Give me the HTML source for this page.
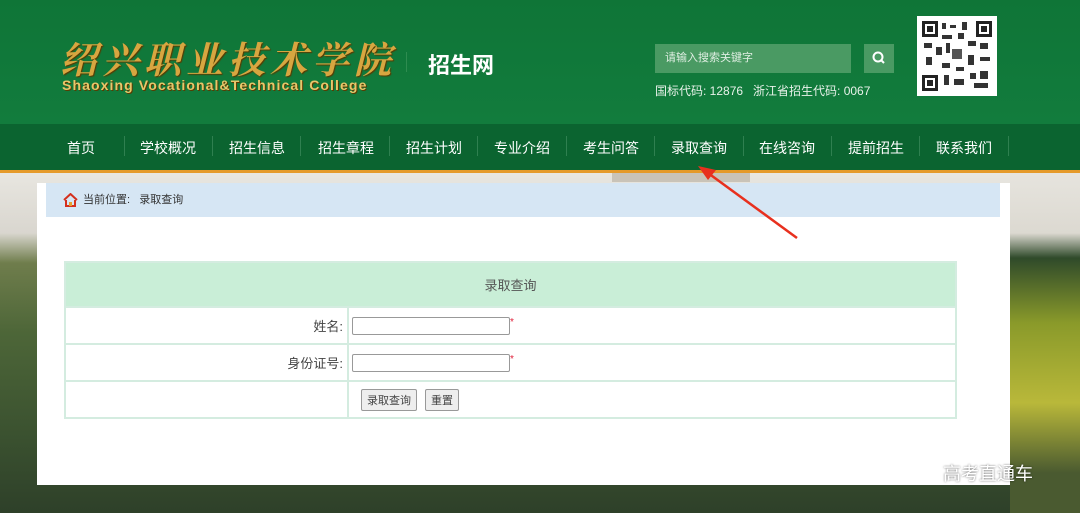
<!DOCTYPE html>
<html><head><meta charset="utf-8"><style>
*{margin:0;padding:0;box-sizing:border-box}
body{width:1080px;height:513px;overflow:hidden;position:relative;font-family:"Liberation Sans","Noto Sans CJK SC",sans-serif;background:#3d5a35}
.bg{position:absolute;left:0;top:173px;width:1080px;height:340px;background:linear-gradient(180deg,#e8e6e0 0,#d9d6cf 60px,#6f7d4c 90px,#4d6638 160px,#3b5230 260px,#2e4029 340px)}
.bgr{position:absolute;left:1010px;top:173px;width:70px;height:340px;background:linear-gradient(180deg,#e6e4de 0,#dcd9d1 60px,#2f4a2a 85px,#8a9a2a 150px,#b9b83a 230px,#4a5a30 300px)}
.header{position:absolute;left:0;top:0;width:1080px;height:124px;background:linear-gradient(180deg,#0f7537,#127c3d)}
.nav{position:absolute;left:0;top:124px;width:1080px;height:46px;background:#0b6430}
.orange{position:absolute;left:0;top:170px;width:1080px;height:3px;background:#e59a2a}
.logo{position:absolute;left:60px;top:30px;font-family:"Noto Serif CJK SC",serif;font-size:37px;font-weight:bold;color:#d7a640;letter-spacing:5px;font-style:italic;text-shadow:1px 1px 1px #5a3a00;white-space:nowrap}
.logoen{position:absolute;left:62px;top:77px;font-size:14px;font-weight:bold;color:#e8c66a;text-shadow:1px 1px 0 #5a3a00;letter-spacing:1.1px;white-space:nowrap}
.sep{position:absolute;left:406px;top:52px;width:1px;height:20px;background:#2e8c50}
.zsw{position:absolute;left:428px;top:48px;color:#fff;font-size:22px;font-weight:bold}
.search{position:absolute;left:655px;top:44px;width:196px;height:29px;background:#4a9a63;color:#dfeee2;font-size:11px;line-height:29px;padding-left:10px}
.sbtn{position:absolute;left:864px;top:44px;width:30px;height:29px;background:#4a9a63}
.codes{position:absolute;left:655px;top:82px;color:#e8f2ea;font-size:12px;white-space:nowrap}
.qr{position:absolute;left:917px;top:16px;width:80px;height:80px;background:#fff;padding:5px}
.navi{position:absolute;top:138px;color:#fff;font-size:14px}
.nsep{position:absolute;top:136px;width:1px;height:20px;background:#2f8050}
.tab{position:absolute;left:612px;top:173px;width:138px;height:9px;background:#c9c3b8}
.panel{position:absolute;left:37px;top:183px;width:973px;height:302px;background:#fff}
.crumb{position:absolute;left:46px;top:183px;width:954px;height:34px;background:#d6e6f4;font-size:11px;color:#333;line-height:34px;padding-left:37px}
table{position:absolute;left:64px;top:261px;width:893px;border-collapse:collapse}
td{border:2px solid #d4ece0;font-size:13px;color:#444}
.th{background:#c9eed7;height:45px;text-align:center;color:#555;font-size:13px}
.lab{width:283px;text-align:right;padding-right:4px;height:37px}
.inp{display:inline-block;width:158px;height:18px;border:1px solid #999;border-radius:2px;vertical-align:middle;margin-left:3px}
.star{color:#e0203a;font-size:10px;vertical-align:top}
.btn{display:inline-block;border:1px solid #999;background:#eee;font-size:11px;padding:2px 5px;border-radius:2px;margin-left:12px}
.wm{position:absolute;left:943px;top:460px;color:#fff;font-size:18px;z-index:5;text-shadow:0 0 2px rgba(0,0,0,.6)}
.arrow{position:absolute;left:0;top:0}
</style></head><body>
<div class="bg"></div><div class="bgr"></div>
<div class="header"></div>
<div class="logo">绍兴职业技术学院</div>
<div class="logoen">Shaoxing Vocational&amp;Technical College</div>
<div class="sep"></div>
<div class="zsw">招生网</div>
<div class="search">请输入搜索关键字</div>
<div class="sbtn"><svg width="30" height="29"><circle cx="14" cy="13" r="4.5" fill="none" stroke="#fff" stroke-width="2"/><line x1="17" y1="16" x2="20" y2="19" stroke="#fff" stroke-width="2"/></svg></div>
<div class="codes">国标代码: 12876&nbsp;&nbsp;&nbsp;浙江省招生代码: 0067</div>
<div class="qr"><svg width="70" height="70" viewBox="0 0 70 70"><rect x="0" y="0" width="16" height="16" fill="#222"/><rect x="3" y="3" width="10" height="10" fill="#fff"/><rect x="5" y="5" width="6" height="6" fill="#222"/><rect x="54" y="0" width="16" height="16" fill="#222"/><rect x="57" y="3" width="10" height="10" fill="#fff"/><rect x="59" y="5" width="6" height="6" fill="#222"/><rect x="0" y="54" width="16" height="16" fill="#222"/><rect x="3" y="57" width="10" height="10" fill="#fff"/><rect x="5" y="59" width="6" height="6" fill="#222"/><g fill="#333"><rect x="20" y="2" width="4" height="6"/><rect x="28" y="4" width="6" height="3"/><rect x="40" y="1" width="5" height="8"/><rect x="20" y="14" width="10" height="4"/><rect x="36" y="12" width="6" height="6"/><rect x="2" y="22" width="8" height="5"/><rect x="14" y="26" width="6" height="8"/><rect x="24" y="22" width="4" height="10"/><rect x="46" y="20" width="8" height="5"/><rect x="58" y="22" width="8" height="6"/><rect x="30" y="28" width="10" height="10" fill="#555"/><rect x="4" y="36" width="6" height="8"/><rect x="46" y="34" width="6" height="10"/><rect x="58" y="36" width="10" height="4"/><rect x="20" y="42" width="8" height="5"/><rect x="34" y="46" width="8" height="4"/><rect x="22" y="54" width="5" height="10"/><rect x="32" y="58" width="10" height="6"/><rect x="48" y="52" width="6" height="6"/><rect x="58" y="50" width="8" height="8"/><rect x="52" y="62" width="14" height="5"/></g></svg></div>
<div class="nav"></div>
<div class="orange"></div>
<div class="navi" style="left:67px">首页</div><div class="nsep" style="left:124px"></div>
<div class="navi" style="left:140px">学校概况</div><div class="nsep" style="left:212px"></div>
<div class="navi" style="left:229px">招生信息</div><div class="nsep" style="left:300px"></div>
<div class="navi" style="left:318px">招生章程</div><div class="nsep" style="left:389px"></div>
<div class="navi" style="left:406px">招生计划</div><div class="nsep" style="left:477px"></div>
<div class="navi" style="left:494px">专业介绍</div><div class="nsep" style="left:566px"></div>
<div class="navi" style="left:583px">考生问答</div><div class="nsep" style="left:654px"></div>
<div class="navi" style="left:671px">录取查询</div><div class="nsep" style="left:743px"></div>
<div class="navi" style="left:759px">在线咨询</div><div class="nsep" style="left:831px"></div>
<div class="navi" style="left:848px">提前招生</div><div class="nsep" style="left:919px"></div>
<div class="navi" style="left:936px">联系我们</div><div class="nsep" style="left:1008px"></div>
<div class="tab"></div>
<div class="panel"></div>
<div class="crumb"><svg style="position:absolute;left:17px;top:10px" width="15" height="14" viewBox="0 0 15 14"><path d="M1 7 L7.5 1 L14 7" fill="none" stroke="#d4301e" stroke-width="2"/><path d="M3 7 V13 H12 V7" fill="none" stroke="#d4301e" stroke-width="2"/><rect x="6" y="9" width="3" height="4" fill="#e8a030"/></svg>当前位置:&nbsp;&nbsp;&nbsp;录取查询</div>
<table>
<tr><td colspan="2" class="th">录取查询</td></tr>
<tr><td class="lab">姓名:</td><td><span class="inp"></span><span class="star">*</span></td></tr>
<tr><td class="lab">身份证号:</td><td><span class="inp"></span><span class="star">*</span></td></tr>
<tr><td class="lab"></td><td><span class="btn">录取查询</span><span class="btn" style="margin-left:8px">重置</span></td></tr>
</table>
<svg class="arrow" width="1080" height="513"><line x1="797" y1="238" x2="708" y2="173" stroke="#e8301e" stroke-width="2.5"/><polygon points="698,166 716,170 708,180" fill="#e8301e"/></svg>
<div class="wm">高考直通车</div>
</body></html>
